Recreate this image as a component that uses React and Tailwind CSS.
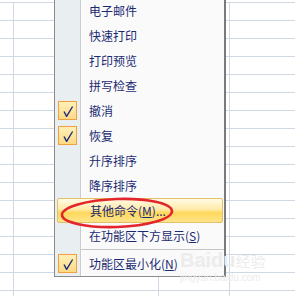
import React from 'react';

const items = [
  { label: '电子邮件' },
  { label: '快速打印' },
  { label: '打印预览' },
  { label: '拼写检查' },
  { label: '撤消', checked: true },
  { label: '恢复', checked: true },
  { label: '升序排序' },
  { label: '降序排序' },
  { label: '其他命令', mn: 'M', suffix: '...', active: true },
  { label: '在功能区下方显示', mn: 'S' },
];

function Check() {
  return (
    <div className="w-[19px] h-[19px] border border-[#f0a040] bg-[linear-gradient(to_bottom,#fff0b8,#fdd987)] flex items-center justify-center">
      <svg width="17" height="17" viewBox="0 0 17 17">
        <path d="M5 9.5 L7.6 14.3 L13.6 4.5" fill="none" stroke="#1c2d7a" strokeWidth="1.4" strokeLinejoin="round" />
      </svg>
    </div>
  );
}

function Item({ label, mn, suffix, checked, active }) {
  return (
    <div
      className={`flex items-center h-[25px] ${
        active
          ? 'ml-[2px] mr-[1px] border border-[#e3c06a] rounded-[2px] bg-[linear-gradient(to_bottom,#fffbe4_0%,#ffeaa8_45%,#ffd75a_60%,#ffe48c_100%)]'
          : ''
      }`}
    >
      <div className={`${active ? 'w-[32px] pl-[1px]' : 'w-[34px] pl-[3px]'} shrink-0`}>
        {checked && <Check />}
      </div>
      <span className="text-[12px] leading-none text-[#1a2a72] whitespace-nowrap">
        {label}
        {mn && (
          <>
            (<span className="underline">{mn}</span>)
          </>
        )}
        {suffix}
      </span>
    </div>
  );
}

export default function App() {
  const rows = Array.from({ length: 17 });

  return (
    <div
      className="relative w-[295px] h-[296px] overflow-hidden bg-white"
      style={{ fontFamily: '"Noto Sans CJK SC", "Noto Sans", sans-serif' }}
    >
      {/* spreadsheet grid */}
      <div className="flex flex-col">
        <div className="h-[3px] border-b border-[#d0d7e5]" />
        {rows.map((_, i) => (
          <div key={i} className="flex h-[18px] border-b border-[#d0d7e5]">
            <div className="w-[14px] border-r border-[#d0d7e5]" />
            <div className="w-[145px] border-r border-[#d0d7e5]" />
            <div className="w-[71px] border-r border-[#d0d7e5]" />
            <div className="flex-1" />
          </div>
        ))}
      </div>

      {/* context menu */}
      <div className="absolute left-[54px] top-[-3px] w-[172px] border-l border-b border-[#8c8c8c] border-r-2 border-r-[#7a7a7a] bg-[linear-gradient(to_right,#e9eef0_25px,#c8cccf_25px,#c8cccf_26px,#ffffff_26px,#ffffff_27px,#fafafa_27px)]">
        <div className="pt-px">
          {items.map((it) => (
            <Item key={it.label} {...it} />
          ))}
          <div className="h-[3px] flex items-center ml-[26px]">
            <div className="h-px w-full bg-[#c5c5c5]" />
          </div>
          <Item label="功能区最小化" mn="N" checked />
        </div>
      </div>

      {/* red annotation ellipse */}
      <svg className="absolute left-0 top-0" width="295" height="296" viewBox="0 0 295 296">
        <ellipse
          cx="117"
          cy="213"
          rx="55"
          ry="14"
          fill="none"
          stroke="#e3262b"
          strokeWidth="2.6"
          transform="rotate(-2 117 213)"
        />
      </svg>

      {/* watermark */}
      <div className="absolute left-[180px] top-[250px] text-[#ececec] leading-none">
        <div className="text-[20px] font-bold" style={{ fontFamily: '"Liberation Sans", sans-serif' }}>
          Baidu<span className="text-[15px] font-normal" style={{ fontFamily: '"Noto Sans CJK SC", sans-serif' }}>经验</span>
        </div>
        <div className="text-[10px] mt-[3px]" style={{ fontFamily: '"Liberation Sans", sans-serif' }}>
          jingyan.baidu.com
        </div>
      </div>
    </div>
  );
}
